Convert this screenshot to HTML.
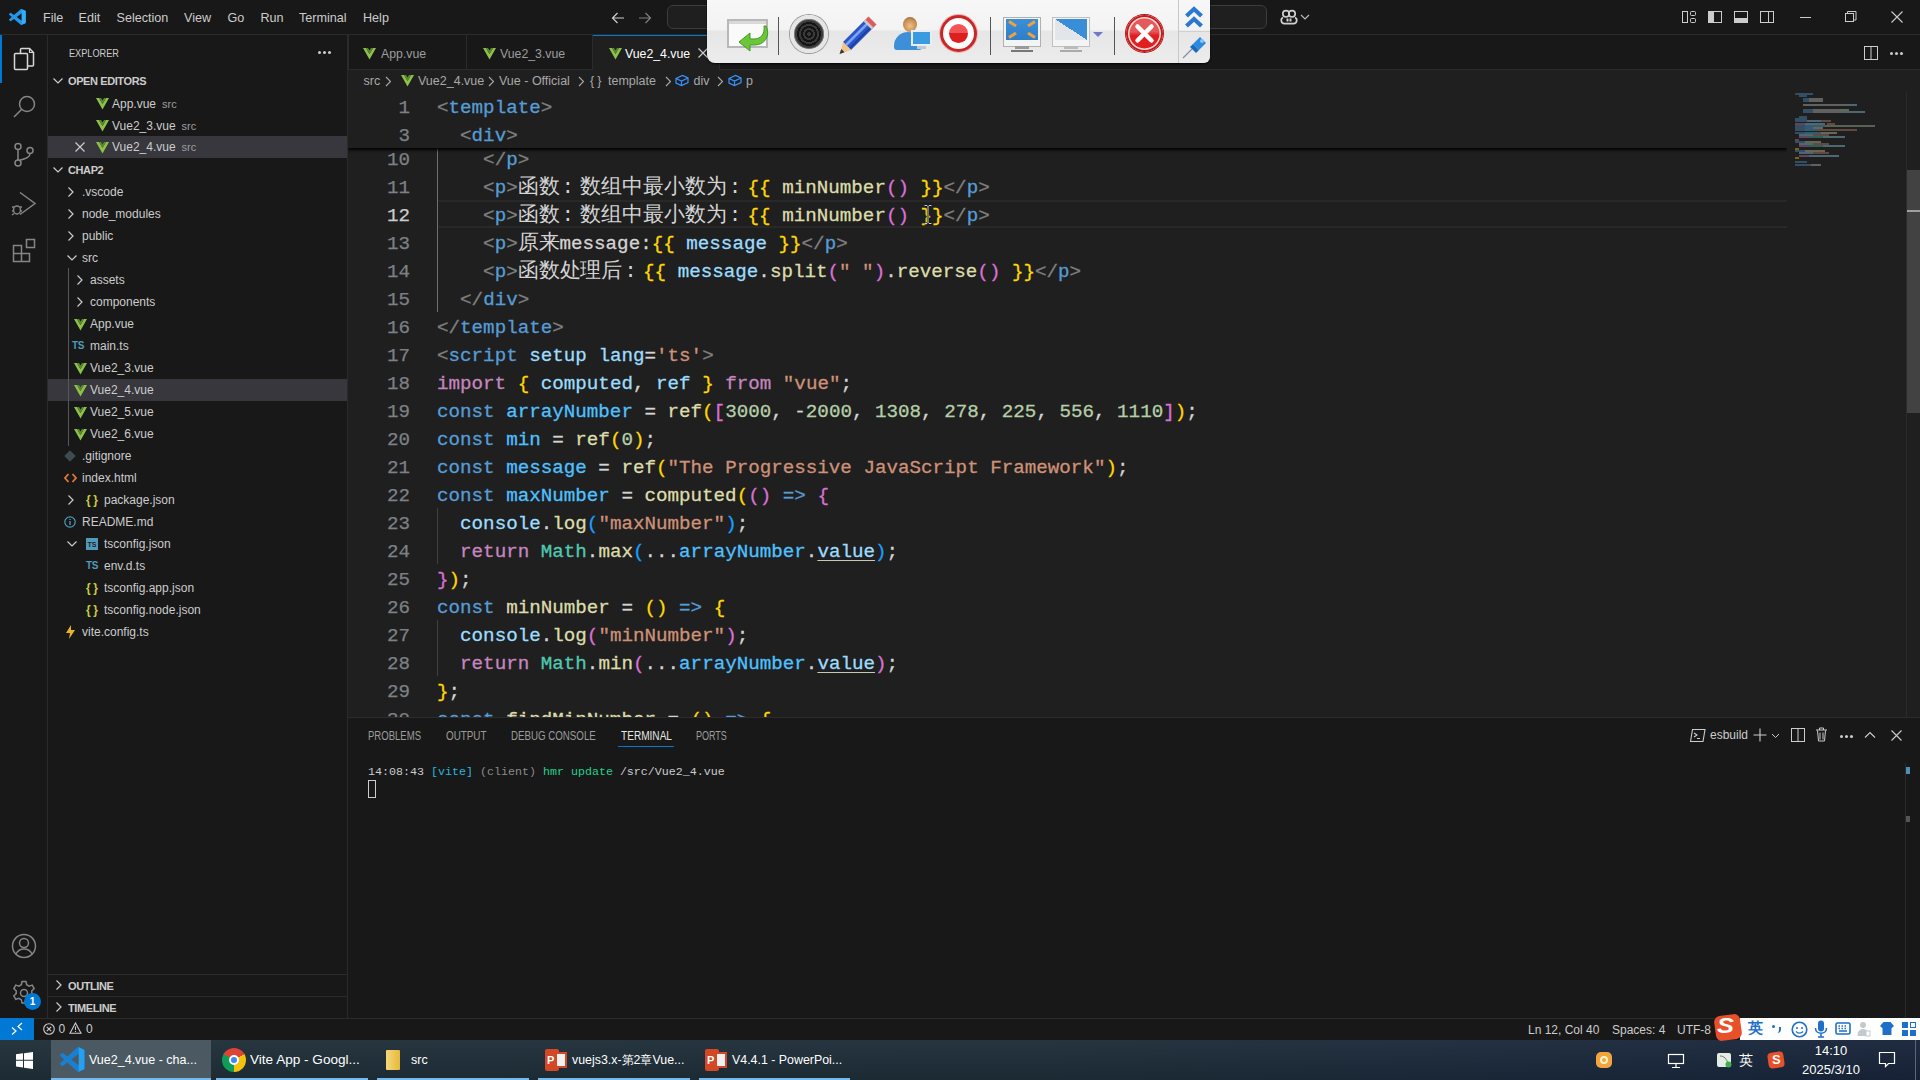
<!DOCTYPE html>
<html><head><meta charset="utf-8">
<style>
*{margin:0;padding:0;box-sizing:border-box}
html,body{width:1920px;height:1080px;overflow:hidden;background:#1f1f1f;font-family:"Liberation Sans",sans-serif;color:#cccccc}
.a{position:absolute}
svg{display:block}
.code{-webkit-text-stroke:0.3px currentColor;font-family:"Liberation Mono",monospace;font-size:19.22px;line-height:28px;white-space:pre;color:#d4d4d4}
.ln{-webkit-text-stroke:0.25px currentColor;width:62px;text-align:right;font-family:"Liberation Mono",monospace;font-size:19.22px;line-height:28px;color:#7d8187}
.cj{-webkit-text-stroke:0;display:inline-block;font-size:21px;letter-spacing:-0.1px;overflow:hidden;vertical-align:top;color:#d4d4d4}
.g{color:#808080}.t{color:#569cd6}.y{color:#ffd700}.f{color:#dcdcaa}.pu{color:#da70d6}.v{color:#9cdcfe}
.s{color:#ce9178}.k{color:#c586c0}.c{color:#4fc1ff}.n{color:#b5cea8}.bl{color:#179fff}.cl{color:#4ec9b0}
.u{text-decoration:underline;text-decoration-color:#c8c8b8;text-underline-offset:3px}
.ui{font-size:13px;line-height:16px;white-space:nowrap;color:#cccccc}
.row{font-size:12px;line-height:22px;height:22px;white-space:nowrap;color:#cccccc}
.desc{font-size:11px;color:#9d9d9d;margin-left:6px}
.hdr{font-size:11px;font-weight:bold;line-height:22px;white-space:nowrap;color:#cccccc;letter-spacing:-0.4px}
</style></head><body>
<div class="a" style="left:0;top:0;width:1920px;height:35px;background:#181818;border-bottom:1px solid #2b2b2b"></div>
<div class="a" style="left:0;top:35px;width:48px;height:983px;background:#181818;border-right:1px solid #2b2b2b"></div>
<div class="a" style="left:48px;top:35px;width:300px;height:983px;background:#181818;border-right:1px solid #2b2b2b"></div>
<div class="a" style="left:348px;top:35px;width:1572px;height:35px;background:#181818;border-bottom:1px solid #2b2b2b"></div>
<div class="a" style="left:348px;top:70px;width:1572px;height:647px;background:#1f1f1f"></div>
<div class="a" style="left:348px;top:717px;width:1572px;height:301px;background:#181818;border-top:1px solid #2b2b2b"></div>
<div class="a" style="left:0;top:1018px;width:1920px;height:22px;background:#181818;border-top:1px solid #2b2b2b"></div>
<div class="a" style="left:0;top:1040px;width:1920px;height:40px;background:linear-gradient(180deg,rgba(255,255,255,0.035),rgba(0,0,0,0.08)),linear-gradient(90deg,#1f2f38,#1e2d38 55%,#1a283c 85%,#18243a)"></div>
<svg class="a" style="left:9px;top:8.5px" width="17" height="16" viewBox="0 0 100 100" preserveAspectRatio="none"><path d="M96.46 10.8L75.86.87a6.23 6.23 0 0 0-7.1 1.2L29.35 38.04 12.19 25.01a4.16 4.16 0 0 0-5.31.24L1.37 30.26a4.16 4.16 0 0 0 0 6.16L16.25 50 1.37 63.58a4.16 4.16 0 0 0 0 6.16l5.51 5.01a4.16 4.16 0 0 0 5.31.24l17.16-13.03 39.41 35.96a6.23 6.23 0 0 0 7.1 1.2l20.6-9.92a6.25 6.25 0 0 0 3.54-5.63V16.43a6.25 6.25 0 0 0-3.54-5.63zM75.02 72.7L45.11 50l29.91-22.7z" fill="#2496e8"/><path d="M75 0.8L96.5 10.8V89.2L75 99.2z" fill="#34aaf8"/></svg>
<div class="a ui" style="left:43px;top:9.5px;font-size:12.6px">File</div>
<div class="a ui" style="left:78.5px;top:9.5px;font-size:12.6px">Edit</div>
<div class="a ui" style="left:116.5px;top:9.5px;font-size:12.6px">Selection</div>
<div class="a ui" style="left:184px;top:9.5px;font-size:12.6px">View</div>
<div class="a ui" style="left:227.5px;top:9.5px;font-size:12.6px">Go</div>
<div class="a ui" style="left:260.5px;top:9.5px;font-size:12.6px">Run</div>
<div class="a ui" style="left:299px;top:9.5px;font-size:12.6px">Terminal</div>
<div class="a ui" style="left:363px;top:9.5px;font-size:12.6px">Help</div>
<svg class="a" style="left:610px;top:10px" width="16" height="16" viewBox="0 0 16 16"><path d="M14 8H2.5M7.5 3L2.5 8l5 5" stroke="#cccccc" stroke-width="1.2" fill="none"/></svg>
<svg class="a" style="left:637px;top:10px" width="16" height="16" viewBox="0 0 16 16"><path d="M2 8h11.5M8.5 3l5 5-5 5" stroke="#7f7f7f" stroke-width="1.2" fill="none"/></svg>
<div class="a" style="left:667px;top:5px;width:600px;height:24px;border:1px solid #3c3c3c;border-radius:6px;background:#1f1f1f"></div>
<svg class="a" style="left:1280px;top:9px" width="18" height="16" viewBox="0 0 18 16"><circle cx="6" cy="4.8" r="3.2" fill="none" stroke="#d0d0d0" stroke-width="1.7"/><circle cx="12" cy="4.8" r="3.2" fill="none" stroke="#d0d0d0" stroke-width="1.7"/><path d="M3 8.5C0.5 9.5 0.5 14.5 4.5 14.6H13.5C17.5 14.5 17.5 9.5 15 8.5" fill="none" stroke="#d0d0d0" stroke-width="1.7"/><rect x="6.5" y="9.5" width="2" height="3" fill="#d0d0d0"/><rect x="9.5" y="9.5" width="2" height="3" fill="#d0d0d0"/></svg>
<svg class="a" style="left:1300px;top:14px" width="10" height="7" viewBox="0 0 10 7"><path d="M1 1l4 4 4-4" stroke="#bbbbbb" stroke-width="1.2" fill="none"/></svg>
<svg class="a" style="left:1681px;top:9px" width="16" height="16" viewBox="0 0 16 16"><rect x="1.5" y="2.5" width="5" height="11" fill="none" stroke="#cccccc"/><rect x="9.5" y="2.5" width="5" height="4" rx="1" fill="none" stroke="#cccccc"/><rect x="9.5" y="9.5" width="5" height="4" rx="1" fill="none" stroke="#cccccc"/></svg>
<svg class="a" style="left:1707px;top:9px" width="16" height="16" viewBox="0 0 16 16"><rect x="1.5" y="2.5" width="13" height="11" fill="none" stroke="#cccccc"/><rect x="2" y="3" width="5" height="10" fill="#cccccc"/></svg>
<svg class="a" style="left:1733px;top:9px" width="16" height="16" viewBox="0 0 16 16"><rect x="1.5" y="2.5" width="13" height="11" fill="none" stroke="#cccccc"/><rect x="2" y="9" width="12" height="4" fill="#cccccc"/></svg>
<svg class="a" style="left:1759px;top:9px" width="16" height="16" viewBox="0 0 16 16"><rect x="1.5" y="2.5" width="13" height="11" fill="none" stroke="#cccccc"/><path d="M9.5 3v10" stroke="#cccccc"/></svg>
<div class="a" style="left:1800px;top:17px;width:11px;height:1px;background:#cccccc"></div>
<svg class="a" style="left:1845px;top:11px" width="12" height="12" viewBox="0 0 12 12"><rect x="0.5" y="2.5" width="8" height="8" fill="none" stroke="#cccccc"/><path d="M2.5 2.5V0.5h8.5v8.5H8.5" fill="none" stroke="#cccccc"/></svg>
<svg class="a" style="left:1891px;top:11px" width="12" height="12" viewBox="0 0 12 12"><path d="M0.5 0.5l11 11M11.5 0.5l-11 11" stroke="#cccccc" stroke-width="1.1"/></svg>
<div class="a" style="left:0;top:35px;width:2px;height:48px;background:#0078d4"></div>
<svg class="a" style="left:12px;top:46px" width="24" height="26" viewBox="0 0 24 26"><path d="M8.5 7.5V3.5a1 1 0 0 1 1-1h8l4 4v12.5a1 1 0 0 1-1 1H15.5" fill="none" stroke="#d7d7d7" stroke-width="1.5"/><path d="M17.5 2.5v4h4" fill="none" stroke="#d7d7d7" stroke-width="1.2"/><rect x="2.5" y="7.5" width="13" height="16" rx="1" fill="none" stroke="#d7d7d7" stroke-width="1.5"/></svg>
<svg class="a" style="left:12px;top:94px" width="25" height="25" viewBox="0 0 25 25"><circle cx="15" cy="10" r="7.5" fill="none" stroke="#858585" stroke-width="1.5"/><path d="M9.5 15.5L2 23" stroke="#858585" stroke-width="1.6"/></svg>
<svg class="a" style="left:13px;top:142px" width="22" height="26" viewBox="0 0 22 26"><circle cx="5" cy="4.5" r="3" fill="none" stroke="#858585" stroke-width="1.5"/><circle cx="5" cy="21" r="3" fill="none" stroke="#858585" stroke-width="1.5"/><circle cx="17" cy="8.5" r="3" fill="none" stroke="#858585" stroke-width="1.5"/><path d="M5 7.5v10.5M17 11.5c0 4-4 5-11 7" fill="none" stroke="#858585" stroke-width="1.5"/></svg>
<svg class="a" style="left:11px;top:190px" width="26" height="27" viewBox="0 0 26 27"><path d="M9 2.5l15 11-15 11" fill="none" stroke="#858585" stroke-width="1.5"/><ellipse cx="6" cy="20" rx="3.5" ry="4" fill="none" stroke="#858585" stroke-width="1.5"/><path d="M1 17h2M1 21h2M1 25l2-1.5M9 17h2M9 21h2" stroke="#858585" stroke-width="1.3"/></svg>
<svg class="a" style="left:12px;top:238px" width="25" height="26" viewBox="0 0 25 26"><path d="M1.5 7.5h8v8h8v8h-16zM1.5 15.5h8v8M9.5 15.5v8" fill="none" stroke="#858585" stroke-width="1.5"/><rect x="14.5" y="1.5" width="8" height="8" fill="none" stroke="#858585" stroke-width="1.5"/></svg>
<svg class="a" style="left:11px;top:933px" width="26" height="26" viewBox="0 0 26 26"><circle cx="13" cy="13" r="11.5" fill="none" stroke="#858585" stroke-width="1.5"/><circle cx="13" cy="10" r="4.5" fill="none" stroke="#858585" stroke-width="1.5"/><path d="M5 21c2-4 5-5 8-5s6 1 8 5" fill="none" stroke="#858585" stroke-width="1.5"/></svg>
<svg class="a" style="left:11px;top:980px" width="26" height="26" viewBox="0 0 26 26"><path d="M11 1.5h4l.7 3.2 2.4 1.4 3.1-1 2 3.5-2.4 2.2v2.8l2.4 2.2-2 3.5-3.1-1-2.4 1.4-.7 3.2h-4l-.7-3.2-2.4-1.4-3.1 1-2-3.5 2.4-2.2v-2.8L2.8 8.6l2-3.5 3.1 1 2.4-1.4z" fill="none" stroke="#858585" stroke-width="1.5"/><circle cx="13" cy="13" r="3.5" fill="none" stroke="#858585" stroke-width="1.5"/></svg>
<div class="a" style="left:24px;top:993px;width:17px;height:17px;border-radius:50%;background:#0078d4;color:#fff;font-size:10px;font-weight:bold;line-height:17px;text-align:center">1</div>
<div class="a" style="left:68.5px;top:46px;font-size:11.2px;line-height:14px;color:#cccccc;transform:scaleX(0.82);transform-origin:0 0">EXPLORER</div>
<div class="a" style="left:318px;top:51px;width:3px;height:3px;background:#cccccc;border-radius:50%;box-shadow:5px 0 0 #cccccc,10px 0 0 #cccccc"></div>
<div class="a" style="left:48px;top:136px;width:299px;height:22px;background:#37373d"></div>
<div class="a" style="left:48px;top:379px;width:299px;height:22px;background:#37373d"></div>
<svg class="a" style="left:52px;top:77px" width="12" height="8" viewBox="0 0 12 8"><path d="M1.5 1.5l4.5 4.5 4.5-4.5" stroke="#cccccc" stroke-width="1.2" fill="none"/></svg>
<div class="a hdr" style="left:68px;top:70px">OPEN EDITORS</div>
<svg class="a" style="left:96px;top:98.0px" width="13" height="12" viewBox="0 0 26 24"><path d="M0 0h6l7 12 7-12h6L13 23z" fill="#8dc149"/><path d="M6 0h4l3 5 3-5h4l-7 12z" fill="#5c8a32"/></svg>
<div class="a row" style="left:112px;top:92.5px">App.vue<span class="desc">src</span></div>
<svg class="a" style="left:96px;top:120.0px" width="13" height="12" viewBox="0 0 26 24"><path d="M0 0h6l7 12 7-12h6L13 23z" fill="#8dc149"/><path d="M6 0h4l3 5 3-5h4l-7 12z" fill="#5c8a32"/></svg>
<div class="a row" style="left:112px;top:114.5px">Vue2_3.vue<span class="desc">src</span></div>
<svg class="a" style="left:96px;top:141.5px" width="13" height="12" viewBox="0 0 26 24"><path d="M0 0h6l7 12 7-12h6L13 23z" fill="#8dc149"/><path d="M6 0h4l3 5 3-5h4l-7 12z" fill="#5c8a32"/></svg>
<div class="a row" style="left:112px;top:136px">Vue2_4.vue<span class="desc">src</span></div>
<svg class="a" style="left:75px;top:142px" width="10" height="10" viewBox="0 0 10 10"><path d="M0.5 0.5l9 9M9.5 0.5l-9 9" stroke="#cccccc" stroke-width="1.2"/></svg>
<svg class="a" style="left:52px;top:166px" width="12" height="8" viewBox="0 0 12 8"><path d="M1.5 1.5l4.5 4.5 4.5-4.5" stroke="#cccccc" stroke-width="1.2" fill="none"/></svg>
<div class="a hdr" style="left:68px;top:159px">CHAP2</div>
<svg class="a" style="left:67px;top:186px" width="8" height="12" viewBox="0 0 8 12"><path d="M1.5 1.5l4.5 4.5-4.5 4.5" stroke="#cccccc" stroke-width="1.2" fill="none"/></svg>
<div class="a row" style="left:82px;top:181px">.vscode</div>
<svg class="a" style="left:67px;top:208px" width="8" height="12" viewBox="0 0 8 12"><path d="M1.5 1.5l4.5 4.5-4.5 4.5" stroke="#cccccc" stroke-width="1.2" fill="none"/></svg>
<div class="a row" style="left:82px;top:203px">node_modules</div>
<svg class="a" style="left:67px;top:230px" width="8" height="12" viewBox="0 0 8 12"><path d="M1.5 1.5l4.5 4.5-4.5 4.5" stroke="#cccccc" stroke-width="1.2" fill="none"/></svg>
<div class="a row" style="left:82px;top:225px">public</div>
<svg class="a" style="left:66px;top:254px" width="12" height="8" viewBox="0 0 12 8"><path d="M1.5 1.5l4.5 4.5 4.5-4.5" stroke="#cccccc" stroke-width="1.2" fill="none"/></svg>
<div class="a row" style="left:82px;top:247px">src</div>
<svg class="a" style="left:76px;top:274px" width="8" height="12" viewBox="0 0 8 12"><path d="M1.5 1.5l4.5 4.5-4.5 4.5" stroke="#cccccc" stroke-width="1.2" fill="none"/></svg>
<div class="a row" style="left:90px;top:269px">assets</div>
<svg class="a" style="left:76px;top:296px" width="8" height="12" viewBox="0 0 8 12"><path d="M1.5 1.5l4.5 4.5-4.5 4.5" stroke="#cccccc" stroke-width="1.2" fill="none"/></svg>
<div class="a row" style="left:90px;top:291px">components</div>
<svg class="a" style="left:74px;top:318.5px" width="13" height="12" viewBox="0 0 26 24"><path d="M0 0h6l7 12 7-12h6L13 23z" fill="#8dc149"/><path d="M6 0h4l3 5 3-5h4l-7 12z" fill="#5c8a32"/></svg>
<div class="a row" style="left:90px;top:313px">App.vue</div>
<div class="a" style="left:72px;top:340px;font-size:10px;font-weight:bold;color:#519aba;line-height:12px;letter-spacing:-0.3px">TS</div>
<div class="a row" style="left:90px;top:335px">main.ts</div>
<svg class="a" style="left:74px;top:362.5px" width="13" height="12" viewBox="0 0 26 24"><path d="M0 0h6l7 12 7-12h6L13 23z" fill="#8dc149"/><path d="M6 0h4l3 5 3-5h4l-7 12z" fill="#5c8a32"/></svg>
<div class="a row" style="left:90px;top:357px">Vue2_3.vue</div>
<svg class="a" style="left:74px;top:384.5px" width="13" height="12" viewBox="0 0 26 24"><path d="M0 0h6l7 12 7-12h6L13 23z" fill="#8dc149"/><path d="M6 0h4l3 5 3-5h4l-7 12z" fill="#5c8a32"/></svg>
<div class="a row" style="left:90px;top:379px">Vue2_4.vue</div>
<svg class="a" style="left:74px;top:406.5px" width="13" height="12" viewBox="0 0 26 24"><path d="M0 0h6l7 12 7-12h6L13 23z" fill="#8dc149"/><path d="M6 0h4l3 5 3-5h4l-7 12z" fill="#5c8a32"/></svg>
<div class="a row" style="left:90px;top:401px">Vue2_5.vue</div>
<svg class="a" style="left:74px;top:428.5px" width="13" height="12" viewBox="0 0 26 24"><path d="M0 0h6l7 12 7-12h6L13 23z" fill="#8dc149"/><path d="M6 0h4l3 5 3-5h4l-7 12z" fill="#5c8a32"/></svg>
<div class="a row" style="left:90px;top:423px">Vue2_6.vue</div>
<div class="a" style="left:66px;top:452px;width:8px;height:8px;background:#3d4c53;transform:rotate(45deg)"></div>
<div class="a row" style="left:82px;top:445px">.gitignore</div>
<svg class="a" style="left:64px;top:473px" width="13" height="10" viewBox="0 0 13 10"><path d="M4.5 1L1 5l3.5 4M8.5 1L12 5l-3.5 4" stroke="#e37933" stroke-width="1.8" fill="none"/></svg>
<div class="a row" style="left:82px;top:467px">index.html</div>
<svg class="a" style="left:67px;top:494px" width="8" height="12" viewBox="0 0 8 12"><path d="M1.5 1.5l4.5 4.5-4.5 4.5" stroke="#cccccc" stroke-width="1.2" fill="none"/></svg>
<div class="a" style="left:86px;top:493px;font-size:12px;font-weight:bold;color:#cbcb41;line-height:14px;letter-spacing:2.5px">{}</div>
<div class="a row" style="left:104px;top:489px">package.json</div>
<svg class="a" style="left:64px;top:516px" width="12" height="12" viewBox="0 0 12 12"><circle cx="6" cy="6" r="5.2" fill="none" stroke="#519aba" stroke-width="1.2"/><path d="M6 5v4M6 3v1" stroke="#519aba" stroke-width="1.3"/></svg>
<div class="a row" style="left:82px;top:511px">README.md</div>
<svg class="a" style="left:66px;top:540px" width="12" height="8" viewBox="0 0 12 8"><path d="M1.5 1.5l4.5 4.5 4.5-4.5" stroke="#cccccc" stroke-width="1.2" fill="none"/></svg>
<div class="a" style="left:86px;top:538px;width:12px;height:12px;background:#519aba;color:#1f1f1f;font-size:7px;font-weight:bold;line-height:13px;text-align:center">TS</div>
<div class="a row" style="left:104px;top:533px">tsconfig.json</div>
<div class="a" style="left:86px;top:560px;font-size:10px;font-weight:bold;color:#519aba;line-height:12px;letter-spacing:-0.3px">TS</div>
<div class="a row" style="left:104px;top:555px">env.d.ts</div>
<div class="a" style="left:86px;top:581px;font-size:12px;font-weight:bold;color:#cbcb41;line-height:14px;letter-spacing:2.5px">{}</div>
<div class="a row" style="left:104px;top:577px">tsconfig.app.json</div>
<div class="a" style="left:86px;top:603px;font-size:12px;font-weight:bold;color:#cbcb41;line-height:14px;letter-spacing:2.5px">{}</div>
<div class="a row" style="left:104px;top:599px">tsconfig.node.json</div>
<svg class="a" style="left:66px;top:625px" width="9" height="14" viewBox="0 0 9 14"><path d="M5 0L0 8h4l-1 6 6-9H5z" fill="#e8b52a"/></svg>
<div class="a row" style="left:82px;top:621px">vite.config.ts</div>
<div class="a" style="left:68px;top:268px;width:1px;height:178px;background:#585858"></div>
<div class="a" style="left:48px;top:974px;width:299px;height:1px;background:#2b2b2b"></div>
<div class="a" style="left:48px;top:996px;width:299px;height:1px;background:#2b2b2b"></div>
<svg class="a" style="left:55px;top:979px" width="8" height="12" viewBox="0 0 8 12"><path d="M1.5 1.5l4.5 4.5-4.5 4.5" stroke="#cccccc" stroke-width="1.2" fill="none"/></svg>
<div class="a hdr" style="left:68px;top:975px">OUTLINE</div>
<svg class="a" style="left:55px;top:1001px" width="8" height="12" viewBox="0 0 8 12"><path d="M1.5 1.5l4.5 4.5-4.5 4.5" stroke="#cccccc" stroke-width="1.2" fill="none"/></svg>
<div class="a hdr" style="left:68px;top:997px">TIMELINE</div>
<div class="a" style="left:348px;top:35px;width:1px;height:35px;background:#2b2b2b"></div>
<div class="a" style="left:466px;top:35px;width:1px;height:34px;background:#2b2b2b"></div>
<div class="a" style="left:592px;top:35px;width:1px;height:34px;background:#2b2b2b"></div>
<div class="a" style="left:593px;top:35px;width:127px;height:35px;background:#1f1f1f;border-top:1px solid #0078d4;border-right:1px solid #2b2b2b"></div>
<svg class="a" style="left:363px;top:47.5px" width="13" height="12" viewBox="0 0 26 24"><path d="M0 0h6l7 12 7-12h6L13 23z" fill="#8dc149"/><path d="M6 0h4l3 5 3-5h4l-7 12z" fill="#5c8a32"/></svg>
<div class="a ui" style="left:381px;top:45.5px;color:#9d9d9d;font-size:12.3px">App.vue</div>
<svg class="a" style="left:483px;top:47.5px" width="13" height="12" viewBox="0 0 26 24"><path d="M0 0h6l7 12 7-12h6L13 23z" fill="#8dc149"/><path d="M6 0h4l3 5 3-5h4l-7 12z" fill="#5c8a32"/></svg>
<div class="a ui" style="left:500px;top:45.5px;color:#9d9d9d;font-size:12.3px">Vue2_3.vue</div>
<svg class="a" style="left:609px;top:47.5px" width="13" height="12" viewBox="0 0 26 24"><path d="M0 0h6l7 12 7-12h6L13 23z" fill="#8dc149"/><path d="M6 0h4l3 5 3-5h4l-7 12z" fill="#5c8a32"/></svg>
<div class="a ui" style="left:625px;top:45.5px;color:#ffffff;font-size:12.3px">Vue2_4.vue</div>
<svg class="a" style="left:698px;top:48px" width="10" height="10" viewBox="0 0 10 10"><path d="M0.5 0.5l9 9M9.5 0.5l-9 9" stroke="#cccccc" stroke-width="1.2"/></svg>
<svg class="a" style="left:1863px;top:45px" width="16" height="16" viewBox="0 0 16 16"><rect x="1.5" y="1.5" width="13" height="13" fill="none" stroke="#cccccc"/><path d="M8 2v12" stroke="#cccccc"/></svg>
<div class="a" style="left:1890px;top:52px;width:3px;height:3px;background:#cccccc;border-radius:50%;box-shadow:5px 0 0 #cccccc,10px 0 0 #cccccc"></div>
<div class="a ui" style="left:363.5px;top:73px;color:#a9a9a9;font-size:12.5px">src</div>
<svg class="a" style="left:384.5px;top:76px" width="7" height="11" viewBox="0 0 7 11"><path d="M1 1l4.5 4.5L1 10" stroke="#a9a9a9" stroke-width="1.1" fill="none"/></svg>
<svg class="a" style="left:401px;top:75px" width="13" height="12" viewBox="0 0 26 24"><path d="M0 0h6l7 12 7-12h6L13 23z" fill="#8dc149"/><path d="M6 0h4l3 5 3-5h4l-7 12z" fill="#5c8a32"/></svg>
<div class="a ui" style="left:418px;top:73px;color:#a9a9a9;font-size:12.5px">Vue2_4.vue</div>
<svg class="a" style="left:488px;top:76px" width="7" height="11" viewBox="0 0 7 11"><path d="M1 1l4.5 4.5L1 10" stroke="#a9a9a9" stroke-width="1.1" fill="none"/></svg>
<div class="a ui" style="left:499px;top:73px;color:#a9a9a9;font-size:12.5px">Vue - Official</div>
<svg class="a" style="left:577.5px;top:76px" width="7" height="11" viewBox="0 0 7 11"><path d="M1 1l4.5 4.5L1 10" stroke="#a9a9a9" stroke-width="1.1" fill="none"/></svg>
<div class="a ui" style="left:590px;top:73px;color:#a9a9a9;letter-spacing:3px;font-size:12.5px">{}</div>
<div class="a ui" style="left:608px;top:73px;color:#a9a9a9;font-size:12.5px">template</div>
<svg class="a" style="left:665px;top:76px" width="7" height="11" viewBox="0 0 7 11"><path d="M1 1l4.5 4.5L1 10" stroke="#a9a9a9" stroke-width="1.1" fill="none"/></svg>
<svg class="a" style="left:675px;top:74px" width="14" height="13" viewBox="0 0 14 13"><path d="M1 4.5L7.5 1.5 13 4v4.5L6.5 11.5 1 9z M1 4.5l5.5 2.5L13 4M6.5 7v4.5" fill="none" stroke="#3794ff" stroke-width="1.2"/></svg>
<div class="a ui" style="left:693.5px;top:73px;color:#a9a9a9;font-size:12.5px">div</div>
<svg class="a" style="left:716.5px;top:76px" width="7" height="11" viewBox="0 0 7 11"><path d="M1 1l4.5 4.5L1 10" stroke="#a9a9a9" stroke-width="1.1" fill="none"/></svg>
<svg class="a" style="left:727.5px;top:74px" width="14" height="13" viewBox="0 0 14 13"><path d="M1 4.5L7.5 1.5 13 4v4.5L6.5 11.5 1 9z M1 4.5l5.5 2.5L13 4M6.5 7v4.5" fill="none" stroke="#3794ff" stroke-width="1.2"/></svg>
<div class="a ui" style="left:746px;top:73px;color:#a9a9a9;font-size:12.5px">p</div>
<div class="a" style="left:348px;top:92px;width:1439px;height:625px;overflow:hidden">
<div class="a" style="left:89px;top:108.0px;width:1350px;height:28px;border-top:2px solid #282828;border-bottom:2px solid #282828"></div>
<div class="a" style="left:89px;top:52.0px;width:1px;height:168px;background:#707070"></div>
<div class="a" style="left:89px;top:416.0px;width:1px;height:56px;background:#404040"></div>
<div class="a" style="left:89px;top:528.0px;width:1px;height:56px;background:#404040"></div>
<div class="ln a" style="left:0;top:53.5px">10</div>
<div class="code a" style="left:89px;top:53.5px">    <span class="g">&lt;/</span><span class="t">p</span><span class="g">&gt;</span></div>
<div class="ln a" style="left:0;top:81.5px">11</div>
<div class="code a" style="left:89px;top:81.5px">    <span class="g">&lt;</span><span class="t">p</span><span class="g">&gt;</span><span class="cj" style="width:229.9px">函数<span style="display:inline-block;width:20.9px;text-align:left;padding-left:2px">:</span>数组中最小数为<span style="display:inline-block;width:20.9px;text-align:left;padding-left:2px">:</span></span><span class="y">{{</span> <span class="f">minNumber</span><span class="pu">()</span> <span class="y">}}</span><span class="g">&lt;/</span><span class="t">p</span><span class="g">&gt;</span></div>
<div class="ln a" style="color:#cccccc;left:0;top:109.5px">12</div>
<div class="code a" style="left:89px;top:109.5px">    <span class="g">&lt;</span><span class="t">p</span><span class="g">&gt;</span><span class="cj" style="width:229.9px">函数<span style="display:inline-block;width:20.9px;text-align:left;padding-left:2px">:</span>数组中最小数为<span style="display:inline-block;width:20.9px;text-align:left;padding-left:2px">:</span></span><span class="y">{{</span> <span class="f">minNumber</span><span class="pu">()</span> <span class="y">}}</span><span class="g">&lt;/</span><span class="t">p</span><span class="g">&gt;</span></div>
<div class="ln a" style="left:0;top:137.5px">13</div>
<div class="code a" style="left:89px;top:137.5px">    <span class="g">&lt;</span><span class="t">p</span><span class="g">&gt;</span><span class="cj" style="width:41.8px">原来</span>message:<span class="y">{{</span> <span class="v">message</span> <span class="y">}}</span><span class="g">&lt;/</span><span class="t">p</span><span class="g">&gt;</span></div>
<div class="ln a" style="left:0;top:165.5px">14</div>
<div class="code a" style="left:89px;top:165.5px">    <span class="g">&lt;</span><span class="t">p</span><span class="g">&gt;</span><span class="cj" style="width:125.4px">函数处理后<span style="display:inline-block;width:20.9px;text-align:left;padding-left:2px">:</span></span><span class="y">{{</span> <span class="v">message</span>.<span class="f">split</span><span class="pu">(</span><span class="s">" "</span><span class="pu">)</span>.<span class="f">reverse</span><span class="pu">()</span> <span class="y">}}</span><span class="g">&lt;/</span><span class="t">p</span><span class="g">&gt;</span></div>
<div class="ln a" style="left:0;top:193.5px">15</div>
<div class="code a" style="left:89px;top:193.5px">  <span class="g">&lt;/</span><span class="t">div</span><span class="g">&gt;</span></div>
<div class="ln a" style="left:0;top:221.5px">16</div>
<div class="code a" style="left:89px;top:221.5px"><span class="g">&lt;/</span><span class="t">template</span><span class="g">&gt;</span></div>
<div class="ln a" style="left:0;top:249.5px">17</div>
<div class="code a" style="left:89px;top:249.5px"><span class="g">&lt;</span><span class="t">script</span> <span class="v">setup</span> <span class="v">lang</span>=<span class="s">'ts'</span><span class="g">&gt;</span></div>
<div class="ln a" style="left:0;top:277.5px">18</div>
<div class="code a" style="left:89px;top:277.5px"><span class="k">import</span> <span class="y">{</span> <span class="v">computed</span>, <span class="v">ref</span> <span class="y">}</span> <span class="k">from</span> <span class="s">"vue"</span>;</div>
<div class="ln a" style="left:0;top:305.5px">19</div>
<div class="code a" style="left:89px;top:305.5px"><span class="t">const</span> <span class="c">arrayNumber</span> = <span class="f">ref</span><span class="y">(</span><span class="pu">[</span><span class="n">3000</span>, -<span class="n">2000</span>, <span class="n">1308</span>, <span class="n">278</span>, <span class="n">225</span>, <span class="n">556</span>, <span class="n">1110</span><span class="pu">]</span><span class="y">)</span>;</div>
<div class="ln a" style="left:0;top:333.5px">20</div>
<div class="code a" style="left:89px;top:333.5px"><span class="t">const</span> <span class="c">min</span> = <span class="f">ref</span><span class="y">(</span><span class="n">0</span><span class="y">)</span>;</div>
<div class="ln a" style="left:0;top:361.5px">21</div>
<div class="code a" style="left:89px;top:361.5px"><span class="t">const</span> <span class="c">message</span> = <span class="f">ref</span><span class="y">(</span><span class="s">"The Progressive JavaScript Framework"</span><span class="y">)</span>;</div>
<div class="ln a" style="left:0;top:389.5px">22</div>
<div class="code a" style="left:89px;top:389.5px"><span class="t">const</span> <span class="c">maxNumber</span> = <span class="f">computed</span><span class="y">(</span><span class="pu">()</span> <span class="t">=&gt;</span> <span class="pu">{</span></div>
<div class="ln a" style="left:0;top:417.5px">23</div>
<div class="code a" style="left:89px;top:417.5px">  <span class="v">console</span>.<span class="f">log</span><span class="bl">(</span><span class="s">"maxNumber"</span><span class="bl">)</span>;</div>
<div class="ln a" style="left:0;top:445.5px">24</div>
<div class="code a" style="left:89px;top:445.5px">  <span class="k">return</span> <span class="cl">Math</span>.<span class="f">max</span><span class="bl">(</span>...<span class="c">arrayNumber</span>.<span class="v u">value</span><span class="bl">)</span>;</div>
<div class="ln a" style="left:0;top:473.5px">25</div>
<div class="code a" style="left:89px;top:473.5px"><span class="pu">}</span><span class="y">)</span>;</div>
<div class="ln a" style="left:0;top:501.5px">26</div>
<div class="code a" style="left:89px;top:501.5px"><span class="t">const</span> <span class="f">minNumber</span> = <span class="y">()</span> <span class="t">=&gt;</span> <span class="y">{</span></div>
<div class="ln a" style="left:0;top:529.5px">27</div>
<div class="code a" style="left:89px;top:529.5px">  <span class="v">console</span>.<span class="f">log</span><span class="pu">(</span><span class="s">"minNumber"</span><span class="pu">)</span>;</div>
<div class="ln a" style="left:0;top:557.5px">28</div>
<div class="code a" style="left:89px;top:557.5px">  <span class="k">return</span> <span class="cl">Math</span>.<span class="f">min</span><span class="pu">(</span>...<span class="c">arrayNumber</span>.<span class="v u">value</span><span class="pu">)</span>;</div>
<div class="ln a" style="left:0;top:585.5px">29</div>
<div class="code a" style="left:89px;top:585.5px"><span class="y">}</span>;</div>
<div class="ln a" style="left:0;top:613.5px">30</div>
<div class="code a" style="left:89px;top:613.5px"><span class="t">const</span> <span class="f">findMinNumber</span> = <span class="y">()</span> <span class="t">=&gt;</span> <span class="y">{</span></div>
<div class="a" style="left:0;top:0;width:1439px;height:56px;background:#1f1f1f;box-shadow:0 2px 3px #000"></div>
<div class="ln a" style="left:0;top:1.5px">1</div><div class="code a" style="left:89px;top:1.5px"><span class="g">&lt;</span><span class="t">template</span><span class="g">&gt;</span></div>
<div class="ln a" style="left:0;top:29.5px">3</div><div class="code a" style="left:89px;top:29.5px">  <span class="g">&lt;</span><span class="t">div</span><span class="g">&gt;</span></div>
</div>
<svg class="a" style="left:923px;top:204px" width="10" height="21" viewBox="0 0 10 21"><path d="M1.5 1.5h2.5l1 1 1-1h2.5M5 2.5v16M1.5 19.5h2.5l1-1 1 1h2.5" stroke="#111" stroke-width="2.2" fill="none"/><path d="M1.5 1.5h2.5l1 1 1-1h2.5M5 2.5v16M1.5 19.5h2.5l1-1 1 1h2.5" stroke="#e8e8e8" stroke-width="0.9" fill="none"/></svg>
<div class="a" style="left:1795px;top:93px;width:2px;height:2px;background:#808080;opacity:.38"></div><div class="a" style="left:1797px;top:93px;width:16px;height:2px;background:#569cd6;opacity:.38"></div><div class="a" style="left:1799px;top:95px;width:8px;height:2px;background:#569cd6;opacity:.38"></div><div class="a" style="left:1803px;top:98px;width:6px;height:2px;background:#569cd6;opacity:.38"></div><div class="a" style="left:1809px;top:98px;width:14px;height:2px;background:#cccccc;opacity:.38"></div><div class="a" style="left:1803px;top:100px;width:6px;height:2px;background:#569cd6;opacity:.38"></div><div class="a" style="left:1809px;top:100px;width:14px;height:2px;background:#cccccc;opacity:.38"></div><div class="a" style="left:1803px;top:104px;width:44px;height:2px;background:#cccccc;opacity:.38"></div><div class="a" style="left:1847px;top:104px;width:10px;height:2px;background:#9cdcfe;opacity:.38"></div><div class="a" style="left:1803px;top:109px;width:10px;height:2px;background:#569cd6;opacity:.38"></div><div class="a" style="left:1813px;top:109px;width:26px;height:2px;background:#cccccc;opacity:.38"></div><div class="a" style="left:1839px;top:109px;width:10px;height:2px;background:#dcdcaa;opacity:.38"></div><div class="a" style="left:1803px;top:111px;width:10px;height:2px;background:#569cd6;opacity:.38"></div><div class="a" style="left:1813px;top:111px;width:26px;height:2px;background:#cccccc;opacity:.38"></div><div class="a" style="left:1839px;top:111px;width:26px;height:2px;background:#9cdcfe;opacity:.38"></div><div class="a" style="left:1799px;top:116px;width:8px;height:2px;background:#569cd6;opacity:.38"></div><div class="a" style="left:1795px;top:118px;width:12px;height:2px;background:#569cd6;opacity:.38"></div><div class="a" style="left:1795px;top:120px;width:12px;height:2px;background:#569cd6;opacity:.38"></div><div class="a" style="left:1807px;top:120px;width:14px;height:2px;background:#9cdcfe;opacity:.38"></div><div class="a" style="left:1821px;top:120px;width:10px;height:2px;background:#ce9178;opacity:.38"></div><div class="a" style="left:1795px;top:123px;width:10px;height:2px;background:#c586c0;opacity:.38"></div><div class="a" style="left:1805px;top:123px;width:20px;height:2px;background:#9cdcfe;opacity:.38"></div><div class="a" style="left:1827px;top:123px;width:8px;height:2px;background:#ce9178;opacity:.38"></div><div class="a" style="left:1795px;top:125px;width:10px;height:2px;background:#569cd6;opacity:.38"></div><div class="a" style="left:1805px;top:125px;width:20px;height:2px;background:#4fc1ff;opacity:.38"></div><div class="a" style="left:1825px;top:125px;width:50px;height:2px;background:#b5cea8;opacity:.38"></div><div class="a" style="left:1795px;top:127px;width:10px;height:2px;background:#569cd6;opacity:.38"></div><div class="a" style="left:1805px;top:127px;width:8px;height:2px;background:#4fc1ff;opacity:.38"></div><div class="a" style="left:1813px;top:127px;width:10px;height:2px;background:#dcdcaa;opacity:.38"></div><div class="a" style="left:1795px;top:129px;width:10px;height:2px;background:#569cd6;opacity:.38"></div><div class="a" style="left:1805px;top:129px;width:12px;height:2px;background:#4fc1ff;opacity:.38"></div><div class="a" style="left:1817px;top:129px;width:40px;height:2px;background:#ce9178;opacity:.38"></div><div class="a" style="left:1795px;top:132px;width:10px;height:2px;background:#569cd6;opacity:.38"></div><div class="a" style="left:1805px;top:132px;width:16px;height:2px;background:#4fc1ff;opacity:.38"></div><div class="a" style="left:1821px;top:132px;width:16px;height:2px;background:#dcdcaa;opacity:.38"></div><div class="a" style="left:1799px;top:134px;width:14px;height:2px;background:#9cdcfe;opacity:.38"></div><div class="a" style="left:1813px;top:134px;width:16px;height:2px;background:#ce9178;opacity:.38"></div><div class="a" style="left:1799px;top:136px;width:10px;height:2px;background:#c586c0;opacity:.38"></div><div class="a" style="left:1809px;top:136px;width:14px;height:2px;background:#4ec9b0;opacity:.38"></div><div class="a" style="left:1823px;top:136px;width:22px;height:2px;background:#9cdcfe;opacity:.38"></div><div class="a" style="left:1795px;top:139px;width:4px;height:2px;background:#da70d6;opacity:.38"></div><div class="a" style="left:1795px;top:141px;width:10px;height:2px;background:#569cd6;opacity:.38"></div><div class="a" style="left:1805px;top:141px;width:16px;height:2px;background:#dcdcaa;opacity:.38"></div><div class="a" style="left:1799px;top:143px;width:14px;height:2px;background:#9cdcfe;opacity:.38"></div><div class="a" style="left:1813px;top:143px;width:16px;height:2px;background:#ce9178;opacity:.38"></div><div class="a" style="left:1799px;top:145px;width:10px;height:2px;background:#c586c0;opacity:.38"></div><div class="a" style="left:1809px;top:145px;width:14px;height:2px;background:#4ec9b0;opacity:.38"></div><div class="a" style="left:1823px;top:145px;width:22px;height:2px;background:#9cdcfe;opacity:.38"></div><div class="a" style="left:1795px;top:148px;width:4px;height:2px;background:#ffd700;opacity:.38"></div><div class="a" style="left:1795px;top:150px;width:10px;height:2px;background:#569cd6;opacity:.38"></div><div class="a" style="left:1805px;top:150px;width:20px;height:2px;background:#dcdcaa;opacity:.38"></div><div class="a" style="left:1799px;top:152px;width:14px;height:2px;background:#9cdcfe;opacity:.38"></div><div class="a" style="left:1813px;top:152px;width:16px;height:2px;background:#ce9178;opacity:.38"></div><div class="a" style="left:1799px;top:155px;width:10px;height:2px;background:#c586c0;opacity:.38"></div><div class="a" style="left:1809px;top:155px;width:30px;height:2px;background:#9cdcfe;opacity:.38"></div><div class="a" style="left:1795px;top:157px;width:4px;height:2px;background:#ffd700;opacity:.38"></div><div class="a" style="left:1795px;top:161px;width:12px;height:2px;background:#569cd6;opacity:.38"></div><div class="a" style="left:1795px;top:164px;width:16px;height:2px;background:#569cd6;opacity:.38"></div><div class="a" style="left:1811px;top:164px;width:10px;height:2px;background:#cccccc;opacity:.38"></div>
<div class="a" style="left:1906px;top:92px;width:1px;height:625px;background:#2b2b2b"></div>
<div class="a" style="left:1907px;top:170px;width:13px;height:243px;background:#424242"></div>
<div class="a" style="left:1907px;top:210px;width:13px;height:2px;background:#a0a0a0"></div>
<div class="a" style="left:368.3px;top:728.5px;font-size:12px;line-height:14px;color:#9d9d9d;transform:scaleX(0.795);transform-origin:0 0">PROBLEMS</div>
<div class="a" style="left:446px;top:728.5px;font-size:12px;line-height:14px;color:#9d9d9d;transform:scaleX(0.82);transform-origin:0 0">OUTPUT</div>
<div class="a" style="left:511.4px;top:728.5px;font-size:12px;line-height:14px;color:#9d9d9d;transform:scaleX(0.81);transform-origin:0 0">DEBUG CONSOLE</div>
<div class="a" style="left:620.8px;top:728.5px;font-size:12px;line-height:14px;color:#e7e7e7;transform:scaleX(0.84);transform-origin:0 0">TERMINAL</div>
<div class="a" style="left:696.4px;top:728.5px;font-size:12px;line-height:14px;color:#9d9d9d;transform:scaleX(0.75);transform-origin:0 0">PORTS</div>
<div class="a" style="left:618px;top:746px;width:56px;height:1px;background:#0078d4"></div>
<div class="a code" style="left:368px;top:763px;font-size:11.67px;line-height:18px;-webkit-text-stroke:0"><span style="color:#cccccc">14:08:43</span> <span style="color:#29b8db">[vite]</span> <span style="color:#8b8b8b">(client)</span> <span style="color:#23d18b">hmr update</span> <span style="color:#cccccc">/src/Vue2_4.vue</span></div>
<div class="a" style="left:368px;top:780px;width:8px;height:18px;border:1px solid #cccccc"></div>
<svg class="a" style="left:1690px;top:728px" width="16" height="15" viewBox="0 0 16 15"><path d="M2.5 1.5h12.5l-2 12H0.5z" fill="none" stroke="#cccccc" stroke-width="1.1"/><path d="M4 5l3 2-3 2M7 10.5h3" stroke="#cccccc" stroke-width="1.1" fill="none"/></svg>
<div class="a" style="left:1710px;top:728px;font-size:12px;line-height:14px;color:#cccccc">esbuild</div>
<svg class="a" style="left:1753px;top:728px" width="14" height="14" viewBox="0 0 14 14"><path d="M7 0.5v13M0.5 7h13" stroke="#cccccc" stroke-width="1.1"/></svg>
<svg class="a" style="left:1771px;top:733px" width="9" height="6" viewBox="0 0 9 6"><path d="M1 1l3.5 3.5L8 1" stroke="#cccccc" stroke-width="1" fill="none"/></svg>
<svg class="a" style="left:1791px;top:728px" width="14" height="14" viewBox="0 0 14 14"><rect x="0.5" y="0.5" width="13" height="13" fill="none" stroke="#cccccc"/><path d="M7 1v12" stroke="#cccccc"/></svg>
<svg class="a" style="left:1815px;top:727px" width="13" height="15" viewBox="0 0 13 15"><path d="M1 3h11M4.5 3V1h4v2M2.5 3.5l1 10.5h6l1-10.5M5 5.5v7M8 5.5v7" stroke="#cccccc" fill="none"/></svg>
<div class="a" style="left:1840px;top:735px;width:3px;height:3px;background:#cccccc;border-radius:50%;box-shadow:5px 0 0 #cccccc,10px 0 0 #cccccc"></div>
<svg class="a" style="left:1864px;top:731px" width="12" height="8" viewBox="0 0 12 8"><path d="M1 6.5l5-5 5 5" stroke="#cccccc" stroke-width="1.1" fill="none"/></svg>
<svg class="a" style="left:1891px;top:730px" width="11" height="11" viewBox="0 0 11 11"><path d="M0.5 0.5l10 10M10.5 0.5l-10 10" stroke="#cccccc" stroke-width="1.1"/></svg>
<div class="a" style="left:1905px;top:763px;width:1px;height:255px;background:#2b2b2b"></div>
<div class="a" style="left:1906px;top:767px;width:4px;height:7px;background:#4a90b8"></div>
<div class="a" style="left:1906px;top:816px;width:4px;height:6px;background:#555"></div>
<div class="a" style="left:0;top:1018px;width:34px;height:22px;background:#0078d4"></div>
<svg class="a" style="left:11px;top:1022px" width="12" height="13" viewBox="0 0 12 13"><path d="M1 5.5l4 3.5-4 3.5M11 1L7 4.5l4 3.5" stroke="#fff" stroke-width="1.2" fill="none"/></svg>
<svg class="a" style="left:43px;top:1023px" width="12" height="12" viewBox="0 0 12 12"><circle cx="6" cy="6" r="5.3" fill="none" stroke="#cccccc" stroke-width="1.1"/><path d="M3.8 3.8l4.4 4.4M8.2 3.8l-4.4 4.4" stroke="#cccccc" stroke-width="1.1"/></svg>
<div class="a" style="left:58.5px;top:1022px;font-size:12px;line-height:14px;color:#cccccc">0</div>
<svg class="a" style="left:69px;top:1022px" width="13" height="12" viewBox="0 0 13 12"><path d="M6.5 1L12 11.3H1z" fill="none" stroke="#cccccc" stroke-width="1.1"/><path d="M6.5 4.5v3.5M6.5 9v1" stroke="#cccccc" stroke-width="1.1"/></svg>
<div class="a" style="left:86px;top:1022px;font-size:12px;line-height:14px;color:#cccccc">0</div>
<div class="a" style="left:1528px;top:1023px;font-size:12px;line-height:14px;color:#cccccc">Ln 12, Col 40</div>
<div class="a" style="left:1612px;top:1023px;font-size:12px;line-height:14px;color:#cccccc">Spaces: 4</div>
<div class="a" style="left:1677px;top:1023px;font-size:12px;line-height:14px;color:#cccccc">UTF-8</div>
<svg class="a" style="left:16px;top:1052px" width="17" height="17" viewBox="0 0 17 17"><path d="M0 2.3L7 1.3v6.5H0zM8 1.2L17 0v7.8H8zM0 8.8h7v6.6L0 14.5zM8 8.8h9V17l-9-1.2z" fill="#ffffff"/></svg>
<div class="a" style="left:51px;top:1040px;width:160px;height:40px;background:#4b5a62"></div>
<div class="a" style="left:51px;top:1078px;width:160px;height:2px;background:#76b9ed"></div>
<div class="a" style="left:216px;top:1078px;width:152px;height:2px;background:#76b9ed"></div>
<div class="a" style="left:377px;top:1078px;width:152px;height:2px;background:#76b9ed"></div>
<div class="a" style="left:538px;top:1078px;width:152px;height:2px;background:#76b9ed"></div>
<div class="a" style="left:699px;top:1078px;width:151px;height:2px;background:#76b9ed"></div>
<svg class="a" style="left:60px;top:1047px" width="25" height="25" viewBox="0 0 100 100"><path d="M96.46 10.8L75.86.87a6.23 6.23 0 0 0-7.1 1.2L29.35 38.04 12.19 25.01a4.16 4.16 0 0 0-5.31.24L1.37 30.26a4.16 4.16 0 0 0 0 6.16L16.25 50 1.37 63.58a4.16 4.16 0 0 0 0 6.16l5.51 5.01a4.16 4.16 0 0 0 5.31.24l17.16-13.03 39.41 35.96a6.23 6.23 0 0 0 7.1 1.2l20.6-9.92a6.25 6.25 0 0 0 3.54-5.63V16.43a6.25 6.25 0 0 0-3.54-5.63zM75.02 72.7L45.11 50l29.91-22.7z" fill="#1a7fd0"/><path d="M75 0.8L96.5 10.8V89.2L75 99.2z" fill="#28a0f0"/></svg>
<div class="a" style="left:89px;top:1052px;font-size:12.5px;line-height:16px;color:#ffffff">Vue2_4.vue - cha...</div>
<div class="a" style="left:222px;top:1048px;width:24px;height:24px;border-radius:50%;background:conic-gradient(from -60deg,#db4437 0 120deg,#f4c20d 120deg 240deg,#0f9d58 240deg 360deg)"></div>
<div class="a" style="left:229px;top:1055px;width:10px;height:10px;border-radius:50%;background:#4285f4;border:2px solid #fff"></div>
<div class="a" style="left:250px;top:1051.5px;font-size:12.5px;line-height:16px;color:#ffffff;transform:scaleX(1.085);transform-origin:0 0">Vite App - Googl...</div>
<div class="a" style="left:386px;top:1050px;width:14px;height:20px;background:linear-gradient(90deg,#f5d77a,#e8b93a);border-radius:1px"></div>
<div class="a" style="left:411px;top:1052px;font-size:12.5px;line-height:16px;color:#ffffff">src</div>
<div class="a" style="left:545px;top:1049px;width:14px;height:22px;background:#d24726;border-radius:2px"></div>
<div class="a" style="left:555px;top:1052px;width:12px;height:16px;background:#f0f0f0;border:2px solid #d24726"></div>
<div class="a" style="left:547px;top:1053px;font-size:11px;font-weight:bold;line-height:14px;color:#fff">P</div>
<div class="a" style="left:572px;top:1052px;font-size:12.4px;line-height:16px;color:#ffffff">vuejs3.x-第2章Vue...</div>
<div class="a" style="left:705px;top:1049px;width:14px;height:22px;background:#d24726;border-radius:2px"></div>
<div class="a" style="left:715px;top:1052px;width:12px;height:16px;background:#f0f0f0;border:2px solid #d24726"></div>
<div class="a" style="left:707px;top:1053px;font-size:11px;font-weight:bold;line-height:14px;color:#fff">P</div>
<div class="a" style="left:732px;top:1052px;font-size:12.4px;line-height:16px;color:#ffffff">V4.4.1 - PowerPoi...</div>
<div class="a" style="left:1596px;top:1052px;width:16px;height:16px;border-radius:5px;background:#f2a53a"></div>
<div class="a" style="left:1600px;top:1056px;width:8px;height:8px;border-radius:50%;border:2px solid #fff3d0"></div>
<svg class="a" style="left:1667px;top:1052px" width="18" height="16" viewBox="0 0 18 16"><rect x="1.5" y="2.5" width="15" height="9" fill="none" stroke="#fff" stroke-width="1.2"/><path d="M9 12v3M5 15.5h8" stroke="#fff" stroke-width="1.2"/></svg>
<div class="a" style="left:1717px;top:1053px;width:14px;height:14px;background:#e4ece4;border-radius:2px"></div><svg class="a" style="left:1719px;top:1054px" width="13" height="14" viewBox="0 0 13 14"><path d="M1 2c4 0 7 3 8 8" stroke="#6a7a6a" stroke-width="1" fill="none"/><circle cx="9.5" cy="10.5" r="3" fill="#3cb04a"/></svg>
<div class="a" style="left:1739px;top:1051px;font-size:14px;line-height:18px;color:#fff">英</div>
<div class="a" style="left:1768px;top:1052px;width:16px;height:16px;border-radius:4px;background:#e8502a;transform:rotate(-8deg)"></div>
<div class="a" style="left:1772px;top:1051px;font-size:13px;font-weight:bold;line-height:18px;color:#fff">S</div>
<div class="a" style="left:1796px;top:1042px;font-size:13px;line-height:18.5px;color:#fff;text-align:center;width:70px">14:10<br>2025/3/10</div>
<svg class="a" style="left:1878px;top:1051px" width="18" height="18" viewBox="0 0 18 18"><path d="M1.5 1.5h15v11h-6l-3 3v-3h-6z" fill="none" stroke="#fff" stroke-width="1.2"/></svg>
<div class="a" style="left:1915px;top:1040px;width:1px;height:40px;background:#5a6a74"></div>
<div class="a" style="left:1740px;top:1018px;width:180px;height:22px;background:#ffffff"></div>
<div class="a" style="left:1715px;top:1015px;width:26px;height:25px;border-radius:6px;background:#e8502a;transform:rotate(-8deg)"></div>
<div class="a" style="left:1718px;top:1013px;font-size:22px;font-weight:bold;line-height:26px;color:#fff;font-style:italic;transform:scaleX(1.15)">S</div>
<div class="a" style="left:1748px;top:1019px;font-size:15px;font-weight:bold;line-height:18px;color:#1e6fc8">英</div>
<div class="a" style="left:1772px;top:1025px;width:3px;height:3px;background:#1e6fc8;border-radius:50%"></div>
<div class="a" style="left:1777px;top:1027px;width:4px;height:6px;border-right:2px solid #1e6fc8;border-radius:0 0 4px 0"></div>
<svg class="a" style="left:1791px;top:1021px" width="17" height="17" viewBox="0 0 17 17"><circle cx="8.5" cy="8.5" r="7.3" fill="none" stroke="#1e6fc8" stroke-width="1.6"/><circle cx="6" cy="7" r="1" fill="#1e6fc8"/><circle cx="11" cy="7" r="1" fill="#1e6fc8"/><path d="M5 10.5c2 2 5 2 7 0" stroke="#1e6fc8" stroke-width="1.3" fill="none"/></svg>
<svg class="a" style="left:1814px;top:1020px" width="14" height="18" viewBox="0 0 14 18"><rect x="4" y="0.5" width="6" height="11" rx="3" fill="#1e6fc8"/><path d="M1.5 8c0 7 11 7 11 0M7 14v3M4 17h6" stroke="#1e6fc8" stroke-width="1.5" fill="none"/></svg>
<svg class="a" style="left:1835px;top:1022px" width="16" height="13" viewBox="0 0 16 13"><rect x="1" y="1" width="14" height="11" rx="1.5" fill="none" stroke="#1e6fc8" stroke-width="1.6"/><path d="M3.5 4h1.5M6.5 4h1.5M9.5 4h1.5M3.5 6.5h1.5M6.5 6.5h1.5M9.5 6.5h1.5M4 9h8" stroke="#1e6fc8" stroke-width="1.3"/></svg>
<svg class="a" style="left:1857px;top:1021px" width="14" height="16" viewBox="0 0 14 16"><circle cx="6" cy="4" r="3" fill="#c4c9cf"/><path d="M0.5 15c0-5 2.5-7 5.5-7s5.5 2 5.5 7z" fill="#c4c9cf"/><rect x="9" y="10" width="4" height="5" fill="#fff" stroke="#c4c9cf"/></svg>
<div class="a" style="left:1880px;top:1022px;width:14px;height:13px;background:#1e6fc8;clip-path:polygon(25% 0,75% 0,100% 30%,82% 48%,82% 100%,18% 100%,18% 48%,0 30%)"></div>
<div class="a" style="left:1902px;top:1022px;width:6px;height:6px;background:#1e6fc8"></div><div class="a" style="left:1910px;top:1022px;width:6px;height:6px;border:1.5px solid #1e6fc8"></div><div class="a" style="left:1902px;top:1030px;width:6px;height:6px;background:#1e6fc8"></div><div class="a" style="left:1910px;top:1030px;width:6px;height:6px;background:#1e6fc8"></div>
<div class="a" style="left:707px;top:0;width:503px;height:63px;border-radius:0 0 6px 8px;background:linear-gradient(#f7f7f7 0,#f3f3f3 30px,#e6e6e6 31px,#ececec 62px);box-shadow:0 1px 2px rgba(0,0,0,.8);overflow:hidden"><div class="a" style="left:471px;top:0;width:1px;height:63px;background:#c8c8c8"></div><div class="a" style="left:472px;top:31px;width:31px;height:1px;background:#d0d0d0"></div><div class="a" style="left:71px;top:17px;width:1px;height:38px;background:#555"></div><div class="a" style="left:283px;top:17px;width:1px;height:38px;background:#555"></div><div class="a" style="left:407px;top:17px;width:1px;height:38px;background:#555"></div><div class="a" style="left:20px;top:19px;width:41px;height:29px;background:#fafafa;border:2px solid #b8b8b8"></div><div class="a" style="left:22px;top:21px;width:37px;height:3px;background:#d9d9d9"></div><svg class="a" style="left:28px;top:22px" width="36" height="32" viewBox="0 0 36 32"><path d="M31 4c4 8 1 18-11 19h-5v6L4 20l11-9v6h4c7 0 11-5 10-13z" fill="#6cc63a" stroke="#3f9a1f" stroke-width="1"/></svg><div class="a" style="left:83px;top:15px;width:38px;height:38px;border-radius:50%;background:repeating-radial-gradient(circle,#3a3a3a 0 2px,#141414 2px 4px);border:4px solid #e6e6e6;box-shadow:0 0 0 1px #9a9a9a,inset 0 0 0 1px #777"></div><svg class="a" style="left:130px;top:13px" width="42" height="42" viewBox="0 0 42 42"><path d="M6 29L28 7l8 8-22 22z" fill="#2a55c8"/><path d="M9 32L31 10" stroke="#7aa4f4" stroke-width="2.5"/><path d="M13 35L35 13" stroke="#1a3a98" stroke-width="1.5"/><path d="M28 7l3.5-3.5 8 8L36 15z" fill="#e05a5a"/><path d="M27.5 7.5l8 8" stroke="#c8c8d0" stroke-width="2.5"/><path d="M6 29l8 8-11 4z" fill="#eec58a"/><path d="M2.5 41l1.8-5 3.2 3.2z" fill="#333"/></svg><div class="a" style="left:196px;top:17px;width:14px;height:15px;border-radius:50%;background:radial-gradient(circle at 50% 60%,#f0c08a 0,#c48a50 60%,#7a4a20 100%)"></div><div class="a" style="left:187px;top:32px;width:28px;height:18px;border-radius:14px 14px 3px 3px;background:#3d8fd8"></div><div class="a" style="left:204px;top:30px;width:21px;height:16px;background:#3a9be0;border:2px solid #e8eef5"></div><div class="a" style="left:210px;top:46px;width:9px;height:3px;background:#c0c8d0"></div><div class="a" style="left:233px;top:15px;width:37px;height:37px;border-radius:50%;background:radial-gradient(circle,#fff 0 60%,#f2f2f2 70%);border:3px solid #c62828;box-shadow:0 0 0 1px #f0b0b0"></div><div class="a" style="left:242px;top:24px;width:19px;height:19px;border-radius:50%;background:linear-gradient(#f25555 0 50%,#dc1f1f 50%)"></div><div class="a" style="left:296px;top:17px;width:38px;height:30px;background:#f4f4f4;border:1px solid #b0b0b0"></div><div class="a" style="left:299px;top:19px;width:32px;height:21px;background:linear-gradient(#3a8ed8,#2f7fc8)"></div><svg class="a" style="left:299px;top:19px" width="32" height="21" viewBox="0 0 32 21"><path d="M3 2.5l7 4.5M29 2.5l-7 4.5M3 18.5l7-4.5M29 18.5l-7-4.5" stroke="#f0a040" stroke-width="3.2"/></svg><div class="a" style="left:308px;top:46px;width:14px;height:3px;background:#999"></div><div class="a" style="left:304px;top:50px;width:22px;height:2px;background:#777"></div><div class="a" style="left:345px;top:17px;width:38px;height:30px;background:#f4f4f4;border:1px solid #c0c0c0"></div><div class="a" style="left:348px;top:19px;width:32px;height:21px;background:linear-gradient(to top right,#e2e6ea 0 50%,#3a8ed8 50%)"></div><div class="a" style="left:357px;top:46px;width:14px;height:3px;background:#bbb"></div><div class="a" style="left:353px;top:50px;width:22px;height:2px;background:#aaa"></div><div class="a" style="left:386px;top:32px;width:0;height:0;border-left:5px solid transparent;border-right:5px solid transparent;border-top:5px solid #6a7ac8"></div><div class="a" style="left:419px;top:15px;width:37px;height:37px;border-radius:50%;background:linear-gradient(#e45a5a 0 45%,#e02020 55%);box-shadow:inset 0 0 0 2px #c41c1c,inset 0 0 0 3.5px #ffd8d8,0 0 0 1px #b01818"></div><svg class="a" style="left:427px;top:23px" width="21" height="21" viewBox="0 0 21 21"><path d="M3.5 3.5l14 14M17.5 3.5l-14 14" stroke="#fff" stroke-width="4.5" stroke-linecap="round"/></svg><svg class="a" style="left:477px;top:6px" width="20" height="22" viewBox="0 0 20 22"><path d="M2.5 10l7.5-7 7.5 7M2.5 20l7.5-7 7.5 7" stroke="#2a78d0" stroke-width="4.2" fill="none"/></svg><svg class="a" style="left:475px;top:35px" width="26" height="24" viewBox="0 0 26 24"><path d="M1 23l9-9" stroke="#8090a8" stroke-width="1.3"/><path d="M11 9l7-7 6 6-7 7z" fill="#2a8ae0"/><path d="M8 12l6 6 3-3-6-6z" fill="#1a6ac0"/><circle cx="20" cy="6" r="2" fill="#8cc4f4"/></svg></div>
</body></html>
